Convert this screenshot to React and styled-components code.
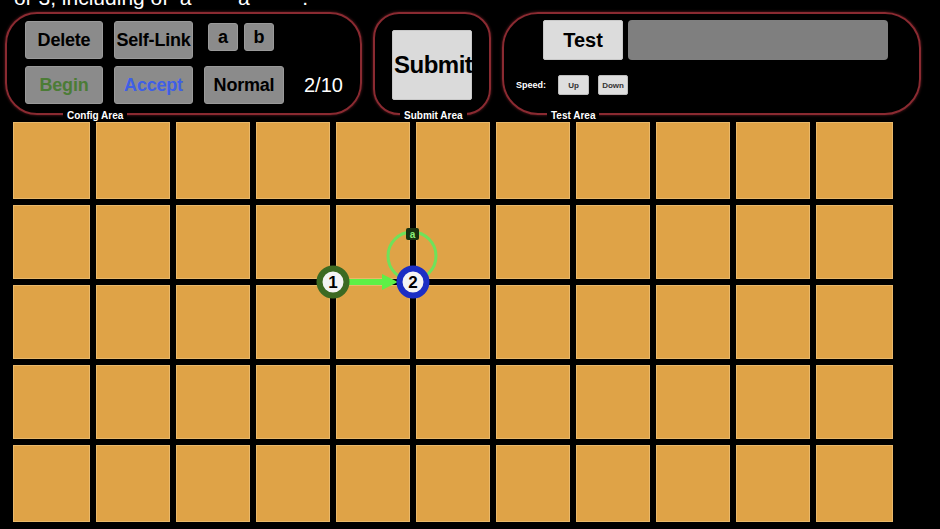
import React from "react";
import styled, { createGlobalStyle } from "styled-components";

const GlobalStyle = createGlobalStyle`
  html, body {
    margin: 0;
    padding: 0;
    background: #000;
    overflow: hidden;
  }
  body {
    font-family: "Liberation Sans", Arial, sans-serif;
    color: #fff;
  }
`;

const Page = styled.div`
  width: 940px;
  height: 529px;
  background: #000;
  overflow: hidden;
`;

const Prompt = styled.div`
  height: 12px;
  overflow: hidden;
  padding-left: 14px;
  font-size: 21px;
  line-height: 0;
  white-space: pre;
`;

const PromptText = styled.span`
  display: inline-block;
  transform: translateY(-2px);
`;

const Toolbar = styled.div`
  display: flex;
  align-items: flex-start;
  gap: 11px;
  padding-left: 5px;
  height: 108px;
`;

const Panel = styled.div`
  position: relative;
  box-sizing: border-box;
  width: ${(p) => p.width}px;
  height: 103px;
  border: 2px solid #8a2a31;
  border-radius: ${(p) => p.radius || 32}px;
  box-shadow: 0 0 3px rgba(170, 50, 60, 0.6);
`;

const PanelLabel = styled.span`
  position: absolute;
  bottom: -9px;
  left: ${(p) => p.left}px;
  padding: 0 4px;
  background: #000;
  font-size: 10px;
  font-weight: bold;
  line-height: 13px;
  color: #fff;
`;

const ConfigBody = styled.div`
  display: grid;
  grid-template-columns: 78px 79px auto;
  column-gap: 11px;
  row-gap: 7px;
  padding: 7px 0 0 18px;
`;

const GrayButton = styled.button`
  box-sizing: border-box;
  height: 38px;
  width: ${(p) => p.w}px;
  padding: 0;
  border: 1px solid #9a9a9a;
  border-radius: 3px;
  background: #8b8b8b;
  color: ${(p) => p.color || "#000"};
  font-family: "Liberation Sans", Arial, sans-serif;
  font-size: 18px;
  font-weight: bold;
  white-space: nowrap;
  overflow: hidden;
  letter-spacing: -0.2px;
`;

const LetterRow = styled.div`
  display: flex;
  gap: 6px;
  padding-top: 2px;
  padding-left: 4px;
`;

const LetterButton = styled(GrayButton)`
  height: 28px;
  width: 30px;
  font-size: 18px;
`;

const SecondRow = styled.div`
  display: flex;
  align-items: center;
  gap: 20px;
`;

const Counter = styled.span`
  font-size: 20px;
  color: #fff;
`;

const SubmitBody = styled.div`
  display: flex;
  padding: 16px 0 0 17px;
`;

const SubmitButton = styled.button`
  box-sizing: border-box;
  width: 80px;
  height: 70px;
  padding: 0 0 0 1px;
  border: 1px solid #c8c8c8;
  border-radius: 2px;
  background: #dadada;
  font-family: "Liberation Sans", Arial, sans-serif;
  font-size: 24px;
  font-weight: bold;
  color: #000;
  text-align: left;
  white-space: nowrap;
  overflow: visible;
  letter-spacing: -0.5px;
`;

const TestBody = styled.div`
  display: flex;
  flex-direction: column;
  gap: 15px;
  padding: 6px 0 0 12px;
`;

const TestRow = styled.div`
  display: flex;
  gap: 5px;
  padding-left: 27px;
`;

const TestButton = styled.button`
  box-sizing: border-box;
  width: 80px;
  height: 40px;
  border: 1px solid #c8c8c8;
  border-radius: 2px;
  background: #dcdcdc;
  font-family: "Liberation Sans", Arial, sans-serif;
  font-size: 20px;
  font-weight: bold;
  color: #000;
`;

const TestInput = styled.div`
  width: 260px;
  height: 40px;
  border-radius: 4px;
  background: #7f7f7f;
`;

const SpeedRow = styled.div`
  display: flex;
  align-items: center;
  gap: 8px;
`;

const SpeedLabel = styled.span`
  font-size: 9px;
  font-weight: bold;
  color: #fff;
  margin-right: 1px;
`;

const SmallButton = styled.button`
  box-sizing: border-box;
  width: ${(p) => p.w}px;
  height: 20px;
  padding: 0;
  border: 1px solid #bdbdbd;
  border-radius: 2px;
  background: #dedede;
  font-family: "Liberation Sans", Arial, sans-serif;
  font-size: 8px;
  font-weight: bold;
  color: #333;
  margin-left: ${(p) => p.ml || 0}px;
`;

const Board = styled.div`
  position: relative;
  margin: 2px 0 0 13px;
  width: 880px;
  display: grid;
  grid-template-columns: 77px repeat(9, 74px) 77px;
  grid-template-rows: 77px repeat(3, 74px) 77px;
  gap: 6px;
`;

const Tile = styled.div`
  background: #dfa347;
  box-shadow: inset 0 0 0 1px #e9b86a;
`;

const Overlay = styled.svg`
  position: absolute;
  left: 0;
  top: 0;
  width: 880px;
  height: 400px;
  pointer-events: none;
  overflow: visible;
`;

const StateNode = ({ x, y, ring, label }) => (
  <g>
    <circle cx={x} cy={y} r={13.5} fill="#f4f4f4" stroke={ring} strokeWidth={6} />
    <text
      x={x}
      y={y + 6}
      textAnchor="middle"
      fontFamily="Liberation Sans, Arial, sans-serif"
      fontWeight="bold"
      fontSize="17"
      fill="#000"
    >
      {label}
    </text>
  </g>
);

const tiles = Array.from({ length: 55 }, (_, i) => i);

export default function App() {
  return (
    <Page>
      <GlobalStyle />
      <Prompt>
        <PromptText>or 3, including of  a        a         .</PromptText>
      </Prompt>
      <Toolbar>
        <Panel width={357}>
          <ConfigBody>
            <GrayButton w={78}>Delete</GrayButton>
            <GrayButton w={79}>Self-Link</GrayButton>
            <LetterRow>
              <LetterButton>a</LetterButton>
              <LetterButton>b</LetterButton>
            </LetterRow>
            <GrayButton w={78} color="#4c7c36">
              Begin
            </GrayButton>
            <GrayButton w={79} color="#3f5fe6">
              Accept
            </GrayButton>
            <SecondRow>
              <GrayButton w={80}>Normal</GrayButton>
              <Counter>2/10</Counter>
            </SecondRow>
          </ConfigBody>
          <PanelLabel left={56}>Config Area</PanelLabel>
        </Panel>
        <Panel width={118} radius={26}>
          <SubmitBody>
            <SubmitButton>Submit</SubmitButton>
          </SubmitBody>
          <PanelLabel left={25}>Submit Area</PanelLabel>
        </Panel>
        <Panel width={419} radius={36}>
          <TestBody>
            <TestRow>
              <TestButton>Test</TestButton>
              <TestInput />
            </TestRow>
            <SpeedRow>
              <SpeedLabel>Speed:</SpeedLabel>
              <SmallButton w={31} ml={3}>
                Up
              </SmallButton>
              <SmallButton w={30} ml={1}>
                Down
              </SmallButton>
            </SpeedRow>
          </TestBody>
          <PanelLabel left={43}>Test Area</PanelLabel>
        </Panel>
      </Toolbar>
      <Board>
        {tiles.map((i) => (
          <Tile key={i} />
        ))}
        <Overlay viewBox="0 0 880 400">
          <circle cx={399} cy={134} r={24} fill="none" stroke="#6fe25a" strokeWidth={3} />
          <rect x={393} y={106} width={13} height={12} rx={2} fill="#17310f" />
          <text
            x={399.5}
            y={116}
            textAnchor="middle"
            fontFamily="Liberation Sans, Arial, sans-serif"
            fontWeight="bold"
            fontSize="10"
            fill="#8af07a"
          >
            a
          </text>
          <line x1={336} y1={160} x2={372} y2={160} stroke="#5ef046" strokeWidth={6} />
          <polygon points="369,152 385,160 369,168" fill="#5ef046" />
          <StateNode x={320} y={160} ring="#3c6a22" label="1" />
          <StateNode x={400} y={160} ring="#1b2ec4" label="2" />
        </Overlay>
      </Board>
    </Page>
  );
}
